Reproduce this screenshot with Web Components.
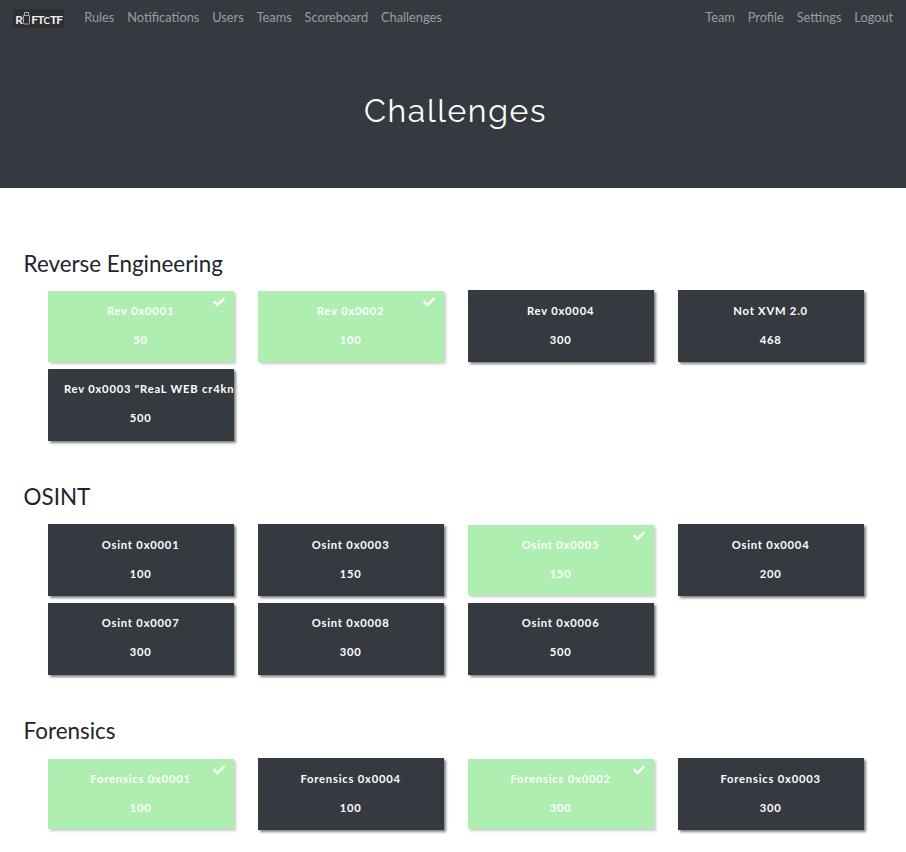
<!DOCTYPE html>
<html lang="en"><head><meta charset="utf-8"><title>Challenges</title>
<style>
html,body{margin:0;height:852px;overflow:hidden;background:#fff}
body{font:12.8px/19.2px Lato,"Liberation Sans",sans-serif;color:#212529}
main{display:block;box-sizing:border-box;height:664px;overflow:hidden;padding:59.6px 24px 0 23.6px}
</style></head><body>
<site-nav>
<nav-link>Rules</nav-link><nav-link>Notifications</nav-link><nav-link>Users</nav-link><nav-link>Teams</nav-link><nav-link>Scoreboard</nav-link><nav-link>Challenges</nav-link>
<nav-link slot="end">Team</nav-link><nav-link slot="end">Profile</nav-link><nav-link slot="end">Settings</nav-link><nav-link slot="end">Logout</nav-link>
</site-nav>
<page-banner>Challenges</page-banner>
<main>
<challenge-category name="Reverse Engineering">
<challenge-card solved points="50">Rev 0x0001</challenge-card><challenge-card solved points="100">Rev 0x0002</challenge-card><challenge-card points="300">Rev 0x0004</challenge-card><challenge-card points="468">Not XVM 2.0</challenge-card><challenge-card points="500">Rev 0x0003 "ReaL WEB cr4kn</challenge-card>
</challenge-category>
<challenge-category name="OSINT">
<challenge-card points="100">Osint 0x0001</challenge-card><challenge-card points="150">Osint 0x0003</challenge-card><challenge-card solved points="150">Osint 0x0005</challenge-card><challenge-card points="200">Osint 0x0004</challenge-card><challenge-card points="300">Osint 0x0007</challenge-card><challenge-card points="300">Osint 0x0008</challenge-card><challenge-card points="500">Osint 0x0006</challenge-card>
</challenge-category>
<challenge-category name="Forensics">
<challenge-card solved points="100">Forensics 0x0001</challenge-card><challenge-card points="100">Forensics 0x0004</challenge-card><challenge-card solved points="300">Forensics 0x0002</challenge-card><challenge-card points="300">Forensics 0x0003</challenge-card>
</challenge-category>
</main>
<script>
const define = (name, html, setup) => customElements.define(name, class extends HTMLElement {
  connectedCallback() {
    if (this.shadowRoot) return;
    const t = document.createElement('template');
    t.innerHTML = html;
    this.attachShadow({mode: 'open'}).append(t.content.cloneNode(true));
    if (setup) setup(this, this.shadowRoot);
  }
});
define('nav-link', `<style>:host{display:block;color:#9a9da0;white-space:nowrap}</style><slot></slot>`);
define('riftctf-logo', `<style>
:host{display:flex;align-items:center;justify-content:center;box-sizing:border-box;width:51px;height:19px;background:#2e2f31;color:#eee;font:700 12px/12px Lato,sans-serif;padding:3px 0 0 1px}
svg{display:block;width:7px;height:14px;margin:-4px 1px 0 1px}
span{letter-spacing:-.8px}
small{font-size:9.5px;font-weight:700;letter-spacing:0}
</style><span>R</span><svg viewBox="0 0 7 14" fill="none" stroke="#aaa" stroke-width="1"><path d="M1.5 4V1.5h4V4M.5 4.5h6v7q0 1.5-1 1.5h-4q-1 0-1-1.5z"/></svg><span>FT<small>C</small>TF</span>`);
define('site-nav', `<style>
:host{display:flex;align-items:center;box-sizing:border-box;height:35px;padding:0 12.8px;background:#343a40}
riftctf-logo{margin:2px 20.4px 0 0}
.links{display:flex;gap:12.8px}
.end{margin-left:auto}
</style><riftctf-logo></riftctf-logo><div class="links"><slot></slot></div><div class="links end"><slot name="end"></slot></div>`);
define('page-banner', `<style>
:host{display:flex;justify-content:center;box-sizing:border-box;height:153px;padding:57px 0 0 5px;background:#343a40;color:#fff}
h1{margin:0;font:400 32px/38.4px Raleway,Lato,sans-serif;letter-spacing:1.6px}
</style><h1><slot></slot></h1>`);
define('challenge-category', `<style>
:host{display:block;height:233.8px}
h3{margin:0;height:42.8px;font:400 22.4px/32px Lato,sans-serif}
.grid{display:grid;grid-template-columns:repeat(4,186px);column-gap:24px;grid-auto-rows:78.4px;padding-left:24.4px}
</style><h3></h3><div class="grid"><slot></slot></div>`, (el, root) => root.querySelector('h3').textContent = el.getAttribute('name'));
define('challenge-card', `<style>
:host{display:block;position:relative;box-sizing:border-box;height:72px;padding:10.7px 16.8px 0 16px;background:#343a40;color:#fff;box-shadow:2.4px 2.4px 2.4px grey;font:700 11.2px/19.2px Lato,sans-serif;letter-spacing:.8px;text-align:center}
:host([solved]){height:70.4px;margin-top:.8px;padding-top:9.9px;background:#37d63e;opacity:.4}
.clip{overflow:hidden;margin-right:-16.8px;padding-right:16.8px}
p{margin:0 0 9.8px;white-space:nowrap}
svg{display:none;position:absolute;right:9.4px;top:4.9px;width:12px;height:12px}
:host([solved]) svg{display:block}
</style><svg viewBox="0 0 512 512"><path fill="#fff" d="M173.9 439.4l-166.4-166.4c-10-10-10-26.2 0-36.2l36.2-36.2c10-10 26.2-10 36.2 0L192 312.7 432.1 72.6c10-10 26.2-10 36.2 0l36.2 36.2c10 10 10 26.2 0 36.2L210.1 439.4c-10 10-26.2 10-36.2 0z"/></svg>
<div class="clip"><p><slot></slot></p></div><span></span>`, (el, root) => root.querySelector('span').textContent = el.getAttribute('points'));
</script></body></html>
